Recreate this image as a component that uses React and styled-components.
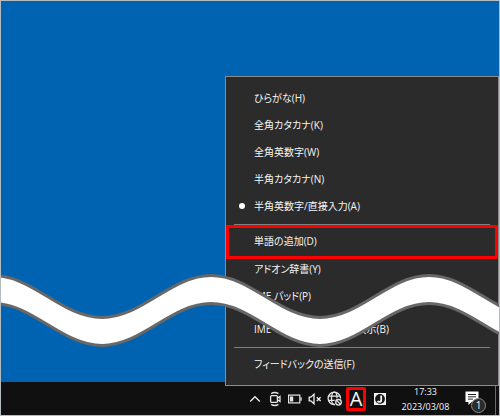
import styled, { createGlobalStyle } from "styled-components";

const modos = [
    { texto: "ひらがな(H)" },
    { texto: "全角カタカナ(K)" },
    { texto: "全角英数字(W)" },
    { texto: "半角カタカナ(N)" },
    { texto: "半角英数字/直接入力(A)", ativo: true },
];

export default function App(){
    return(
        <>
            <GlobalStyle/>
            <Tela>
                <AreaDeTrabalho/>
                <Menu role="menu">
                    {modos.map((m) => (
                        <Item key={m.texto} role="menuitemradio" aria-checked={!!m.ativo}>
                            <Marca>{m.ativo && <Ponto/>}</Marca>
                            {m.texto}
                        </Item>
                    ))}
                    <Divisor/>
                    <Item role="menuitem" $destaque><Marca/>単語の追加(D)</Item>
                    <Item role="menuitem"><Marca/>アドオン辞書(Y)</Item>
                    <Item role="menuitem"><Marca/>IME パッド(P)</Item>
                    <Espaco/>
                    <Item role="menuitem"><Marca/>IME ツール バー の画面表示(B)</Item>
                    <Divisor/>
                    <Item role="menuitem"><Marca/>フィードバックの送信(F)</Item>
                </Menu>
                <Barra>
                    <Bandeja>
                        <Botao aria-label="隠れているインジケーター"><Seta/></Botao>
                        <Botao aria-label="カメラ"><Camera/></Botao>
                        <Botao aria-label="バッテリー"><Bateria/></Botao>
                        <Botao aria-label="音量"><SemSom/></Botao>
                        <Botao aria-label="ネットワーク"><Globo/></Botao>
                    </Bandeja>
                    <BotaoIme>A</BotaoIme>
                    <BotaoJ aria-label="IME"><LogoJ/></BotaoJ>
                    <Relogio>
                        <time>17:33</time>
                        <time>2023/03/08</time>
                    </Relogio>
                    <BotaoAviso aria-label="通知">
                        <Balao/>
                        <Contador>1</Contador>
                    </BotaoAviso>
                    <Borda/>
                </Barra>
                <Onda/>
            </Tela>
        </>
    );
}

function Seta(){
    return(
        <svg width="12" height="12" viewBox="0 0 12 12" fill="none" stroke="#eee" strokeWidth="1.3">
            <path d="M1.2 8.5 6 3.7l4.8 4.8"/>
        </svg>
    );
}

function Camera(){
    return(
        <svg width="14" height="16" viewBox="0 0 14 16" fill="none" stroke="#e6e6e6" strokeWidth="1.3">
            <rect x="2.6" y="4.6" width="6.8" height="6.8" rx="1.2"/>
            <path d="M9.4 7.2 12 5.4v5.2L9.4 8.8"/>
            <path d="M3.2 2.6Q6.8.4 10.4 2.6M3.2 13.4Q6.8 15.6 10.4 13.4"/>
        </svg>
    );
}

function Bateria(){
    return(
        <svg width="14" height="12" viewBox="0 0 14 12">
            <rect x=".6" y="2.1" width="11.2" height="7.8" fill="none" stroke="#e6e6e6" strokeWidth="1.2"/>
            <path d="M12.400 4.300h1.300v3.400h-1.300zM2 3.500h3.200v5H2z" fill="#e6e6e6"/>
        </svg>
    );
}

function SemSom(){
    return(
        <svg width="14" height="14" viewBox="0 0 14 14" fill="none" stroke="#f0f0f0" strokeWidth="1.3">
            <path d="M1.2 5.2h1.600L6 2.200v9.600L2.800 8.800H1.200z"/>
            <path d="m8.8 5.2 3.8 3.8M12.6 5.2 8.8 9"/>
        </svg>
    );
}

function Globo(){
    return(
        <svg width="16" height="16" viewBox="0 0 16 16" fill="none" stroke="#e6e6e6" strokeWidth="1.3">
            <circle cx="7.3" cy="7.3" r="6.2"/>
            <ellipse cx="7.3" cy="7.3" rx="2.8" ry="6.2"/>
            <path d="M1.8 5.2h11M1.8 9.4h11"/>
            <circle cx="11.5" cy="11.3" r="4.2" fill="#101010" stroke="none"/>
            <circle cx="11.5" cy="11.3" r="2.8"/>
            <path d="m9.6 9.4 3.8 3.8"/>
        </svg>
    );
}

function LogoJ(){
    return(
        <svg width="12" height="12" viewBox="0 0 12 12">
            <path d="M0 0h12v12H0z" fill="#f4f4f4"/>
            <circle cx="6" cy="6" r="4.9" fill="#151515"/>
            <path d="M7.2 2.4v4.8q0 1.7-1.9 1.7-1.2 0-1.9-.7" fill="none" stroke="#f4f4f4" strokeWidth="1.8"/>
        </svg>
    );
}

function Balao(){
    return(
        <svg width="14" height="15" viewBox="0 0 14 15">
            <path d="M.5.5h13v10.6H6.6L3.4 14v-2.9H.5z" fill="#fff"/>
            <path d="M3 3.5h8M3 5.8h8M3 8.1h5" stroke="#222" strokeWidth="1"/>
        </svg>
    );
}

function Onda(){
    return(
        <FaixaOnda viewBox="0 0 500 76" preserveAspectRatio="none" aria-hidden="true">
            <path
                d="M-7 2.5C33 2.5 62 44.5 102 44.5S171 2.5 211 2.5s69 42 109 42S389 2.5 429 2.5s69 42 109 42V72.5C498 72.5 469 30.5 429 30.5S360 72.5 320 72.5S251 30.5 211 30.5S142 72.5 102 72.5S33 30.5-7 30.5Z"
                fill="#fff"
                stroke="#686868"
                strokeWidth="3"
            />
        </FaixaOnda>
    );
}

const GlobalStyle = createGlobalStyle`
    * {
        box-sizing: border-box;
    }
    body {
        margin: 0;
        font-family: "Open Sans", "Noto Sans CJK JP", sans-serif;
    }
    button {
        margin: 0;
        padding: 0;
        border: none;
        background: none;
        color: inherit;
        font: inherit;
    }
    svg {
        display: block;
    }
`;

const Tela = styled.div`
    position: relative;
    display: flex;
    flex-direction: column;
    min-height: 100vh;
    border: 1px solid #b4bcc0;
    overflow: hidden;
`;

const AreaDeTrabalho = styled.main`
    flex: 1;
    background-color: #0063b1;
`;

const Menu = styled.div`
    position: absolute;
    right: 0;
    bottom: 29px;
    width: 274px;
    padding: 8px 3px 7px;
    display: flex;
    flex-direction: column;
    background-color: #2b2b2b;
    border: 1px solid #8c8c8c;
    color: #f6f6f6;
    font-size: 10px;
    font-feature-settings: "palt";
`;

const Item = styled.button`
    display: flex;
    align-items: center;
    height: ${(p) => (p.$destaque ? "28px" : "27px")};
    padding-bottom: 2px;
    line-height: 16px;
    text-align: left;
    white-space: pre;
    outline: ${(p) => (p.$destaque ? "3px solid #ff0000" : "none")};
`;

const Marca = styled.span`
    display: flex;
    justify-content: center;
    width: 25px;
`;

const Ponto = styled.span`
    width: 6px;
    height: 6px;
    border-radius: 50%;
    background-color: #ffffff;
`;

const Divisor = styled.hr`
    width: 256px;
    height: 1px;
    margin: 4px auto 3px;
    border: none;
    background-color: #808080;
`;

const Espaco = styled.div`
    height: 6px;
`;

const Barra = styled.footer`
    display: flex;
    justify-content: flex-end;
    align-items: center;
    height: 33px;
    background-color: #101010;
    color: #f6f6f6;
`;

const Bandeja = styled.div`
    display: flex;
    padding-right: 1px;
`;

const Botao = styled.button`
    display: flex;
    justify-content: center;
    align-items: center;
    width: 20px;
    height: 24px;
`;

const BotaoIme = styled(Botao)`
    border: 3px solid #ff0000;
    border-radius: 2px;
    font-size: 20px;
    line-height: 18px;
`;

const BotaoJ = styled(Botao)`
    width: 28px;
`;

const Relogio = styled.div`
    display: flex;
    flex-direction: column;
    align-items: center;
    width: 63px;
    font-size: 9px;
    line-height: 15px;
`;

const BotaoAviso = styled(Botao)`
    position: relative;
    width: 30px;
`;

const Contador = styled.span`
    position: absolute;
    right: 1px;
    bottom: -2px;
    width: 15px;
    height: 15px;
    border: 1px solid #8a8a8a;
    border-radius: 50%;
    background-color: #2b2b2b;
    font-size: 10px;
    line-height: 13px;
    text-align: center;
`;

const Borda = styled.div`
    width: 4px;
    height: 100%;
    margin-left: 8px;
    border-left: 1px solid #6a6a6a;
`;

const FaixaOnda = styled.svg`
    position: absolute;
    left: -1px;
    bottom: 66px;
    width: calc(100% + 2px);
    height: 76px;
`;
